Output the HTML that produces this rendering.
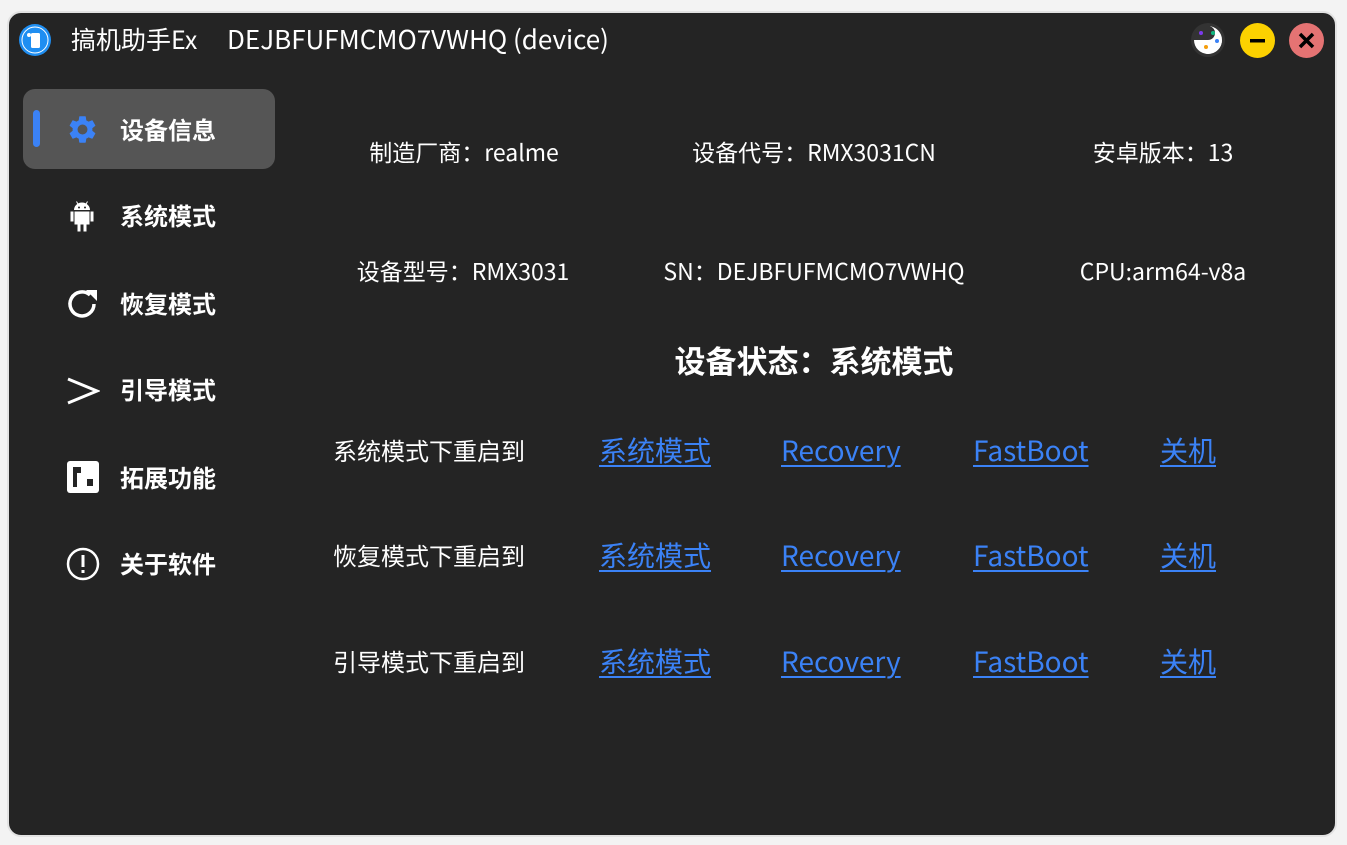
<!DOCTYPE html>
<html><head><meta charset="utf-8"><style>
*{margin:0;padding:0;box-sizing:border-box}
body{width:1347px;height:845px;background:#f3f3f3;font-family:"Noto Sans CJK SC","Liberation Sans",sans-serif;position:relative;overflow:hidden;color:#fff;line-height:1}
.win{position:absolute;left:7px;top:11px;width:1330px;height:826px;background:#242424;border:2px solid #e2e2e2;border-radius:14px}
.abs{position:absolute;white-space:nowrap}
.t{font-size:25px;top:27px}
.nav{position:absolute;left:120px;font-size:24px;font-weight:bold;color:#fff}
.sel{position:absolute;left:23px;top:89px;width:252px;height:80px;background:#555;border-radius:12px}
.bar{position:absolute;left:33px;top:110px;width:7px;height:37px;background:#3b82f6;border-radius:4px}
.info{position:absolute;font-size:23px;transform:translateX(-50%);white-space:nowrap}
.lbl{position:absolute;left:333px;font-size:24px}
.lk{position:absolute;font-size:28px;color:#3b82f6;text-decoration:underline;text-underline-offset:4px;text-decoration-thickness:1.5px}
</style></head><body>
<div class="win"></div>
<svg class="abs" style="left:19px;top:24px" width="32" height="32" viewBox="0 0 32 32"><circle cx="16" cy="16" r="16" fill="#1f8ef1"/><circle cx="16" cy="16" r="13" fill="none" stroke="#fff" stroke-width="1"/><rect x="12" y="9" width="9" height="15" rx="1.5" fill="#fff"/><circle cx="10" cy="11" r="2" fill="#fff"/></svg>
<div class="abs t" style="left:71px">搞机助手Ex</div>
<div class="abs t" style="left:227px;font-size:26px;top:26px">DEJBFUFMCMO7VWHQ (device)</div>
<svg class="abs" style="left:1191px;top:23px" width="34" height="34" viewBox="0 0 34 34"><circle cx="17" cy="17" r="17" fill="#333"/><path d="M17 3a14 14 0 0 1 0 28a7 7 0 0 1 0-14a7 7 0 0 0 0-14z" fill="#fff"/><path d="M3 17a14 14 0 0 0 28 0z" fill="#fff"/><circle cx="10" cy="10" r="2" fill="#7c3aed"/><circle cx="22" cy="10" r="2" fill="#10b981"/><circle cx="26" cy="18" r="2" fill="#3b82f6"/><circle cx="15" cy="24" r="2" fill="#f59e0b"/></svg>
<svg class="abs" style="left:1240px;top:23px" width="35" height="35"><circle cx="17.5" cy="17.5" r="17.5" fill="#fcd100"/><rect x="10" y="16" width="15" height="3.5" fill="#000"/></svg>
<svg class="abs" style="left:1289px;top:23px" width="35" height="35"><circle cx="17.5" cy="17.5" r="17.5" fill="#e57373"/><path d="M11 11L24 24M24 11L11 24" stroke="#000" stroke-width="3.5"/></svg>

<div class="sel"></div><div class="bar"></div>
<svg class="abs" style="left:66px;top:113px" width="33" height="33" viewBox="0 0 24 24"><path fill="#3b82f6" d="M19.14 12.94c.04-.3.06-.61.06-.94s-.02-.64-.07-.94l2.030-1.58a.49.49 0 0 0 .12-.61l-1.92-3.32a.49.49 0 0 0-.59-.22l-2.39.96c-.5-.38-1.03-.7-1.62-.94l-.36-2.54a.48.48 0 0 0-.48-.41h-3.84c-.24 0-.43.17-.47.41l-.36 2.54c-.59.24-1.13.57-1.62.94l-2.39-.96a.49.49 0 0 0-.59.22L2.74 8.87c-.12.21-.08.47.12.61l2.03 1.58c-.05.3-.09.63-.09.94s.02.64.07.94l-2.03 1.58a.49.49 0 0 0-.12.61l1.92 3.32c.12.22.37.29.59.22l2.39-.96c.5.38 1.03.7 1.62.94l.36 2.54c.05.24.24.41.48.41h3.84c.24 0 .44-.17.47-.41l.36-2.54c.59-.24 1.13-.56 1.62-.94l2.39.96c.22.08.47 0 .59-.22l1.92-3.32c.12-.22.07-.47-.12-.61l-2.01-1.58zM12 15.6A3.6 3.6 0 1 1 12 8.4a3.6 3.6 0 0 1 0 7.2z"/></svg>
<div class="nav" style="top:117px">设备信息</div>
<svg class="abs" style="left:68px;top:199px" width="28" height="34" viewBox="0 0 28 34"><path fill="#fff" d="M6 11a8 7.5 0 0 1 16 0z M2.5 12.5h3v10h-3z M22.5 12.5h3v10h-3z M6.5 12.5h15v13h-3v7h-3v-7h-3v7h-3v-7h-3z"/><path d="M8.5 2.5l2 3.5M19.5 2.5l-2 3.5" stroke="#fff" stroke-width="1"/><circle cx="11" cy="8.5" r="1" fill="#242424"/><circle cx="17" cy="8.5" r="1" fill="#242424"/></svg>
<div class="nav" style="top:203px">系统模式</div>
<svg class="abs" style="left:66px;top:287px" width="34" height="34" viewBox="0 0 34 34"><path d="M28 17a12 12 0 1 1-4-9" fill="none" stroke="#fff" stroke-width="3.5"/><path d="M20 3h11v11z" fill="#fff"/></svg>
<div class="nav" style="top:291px">恢复模式</div>
<svg class="abs" style="left:66px;top:376px" width="34" height="30"><path d="M2 3L31 15L2 27" fill="none" stroke="#fff" stroke-width="3"/></svg>
<div class="nav" style="top:377px">引导模式</div>
<svg class="abs" style="left:67px;top:461px" width="32" height="32"><rect width="32" height="32" rx="3" fill="#fff"/><path d="M6 6h8v6h-4v14h-4z" fill="#242424"/><rect x="20" y="18" width="6" height="7" fill="#242424"/></svg>
<div class="nav" style="top:465px">拓展功能</div>
<svg class="abs" style="left:66px;top:547px" width="34" height="34"><circle cx="17" cy="17" r="15" fill="none" stroke="#fff" stroke-width="2.5"/><rect x="15.5" y="8" width="3" height="12" fill="#fff"/><rect x="15.5" y="23" width="3" height="3" fill="#fff"/></svg>
<div class="nav" style="top:551px">关于软件</div>

<div class="info" style="left:464px;top:140px">制造厂商：realme</div>
<div class="info" style="left:814px;top:140px">设备代号：RMX3031CN</div>
<div class="info" style="left:1163px;top:140px">安卓版本：13</div>
<div class="info" style="left:463px;top:259px">设备型号：RMX3031</div>
<div class="info" style="left:814px;top:259px">SN：DEJBFUFMCMO7VWHQ</div>
<div class="info" style="left:1163px;top:259px">CPU:arm64-v8a</div>
<div class="info" style="left:814px;top:344px;font-size:31px;font-weight:bold">设备状态：系统模式</div>

<div class="lbl" style="top:438px">系统模式下重启到</div>
<div class="lk" style="left:599px;top:436px">系统模式</div><div class="lk" style="left:781px;top:436px">Recovery</div><div class="lk" style="left:973px;top:436px">FastBoot</div><div class="lk" style="left:1160px;top:436px">关机</div>
<div class="lbl" style="top:543px">恢复模式下重启到</div>
<div class="lk" style="left:599px;top:541px">系统模式</div><div class="lk" style="left:781px;top:541px">Recovery</div><div class="lk" style="left:973px;top:541px">FastBoot</div><div class="lk" style="left:1160px;top:541px">关机</div>
<div class="lbl" style="top:649px">引导模式下重启到</div>
<div class="lk" style="left:599px;top:647px">系统模式</div><div class="lk" style="left:781px;top:647px">Recovery</div><div class="lk" style="left:973px;top:647px">FastBoot</div><div class="lk" style="left:1160px;top:647px">关机</div>
</body></html>
